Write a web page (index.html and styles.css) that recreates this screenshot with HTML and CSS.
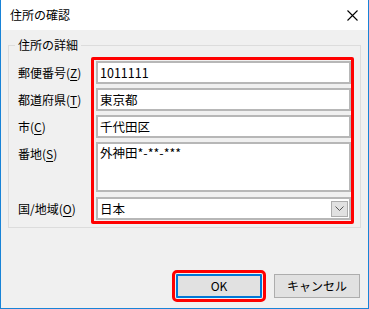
FILE: index.html
```html
<!DOCTYPE html>
<html lang="ja">
<head>
<meta charset="utf-8">
<link rel="stylesheet" href="styles.css">
</head>
<body>
<div class="window">
  <div class="titlebar">
    <span class="title">住所の確認</span>
    <svg class="close" width="11" height="11" viewBox="0 0 11 11"><path d="M0.5 0.5 L10.5 10.5 M10.5 0.5 L0.5 10.5" stroke="#000" stroke-width="1.1" fill="none"/></svg>
  </div>
  <div class="content">
    <div class="group">
      <span class="legend">住所の詳細</span>
      <div class="form">
        <div class="labels">
          <div class="label row">郵便番号(<u>Z</u>)</div>
          <div class="label row">都道府県(<u>T</u>)</div>
          <div class="label row">市(<u>C</u>)</div>
          <div class="label tall">番地(<u>S</u>)</div>
          <div class="label row last">国/地域(<u>O</u>)</div>
        </div>
        <div class="fields">
          <div class="input">1011111</div>
          <div class="input">東京都</div>
          <div class="input">千代田区</div>
          <div class="input area">外神田*-**-***</div>
          <div class="input combo">
            <span>日本</span>
            <span class="drop"><svg width="9" height="5" viewBox="0 0 9 5"><path d="M0.5 0.5 L4.5 4.5 L8.5 0.5" stroke="#555" stroke-width="1" fill="none"/></svg></span>
          </div>
        </div>
      </div>
    </div>
    <div class="buttons">
      <div class="btn ok">OK</div>
      <div class="btn">キャンセル</div>
    </div>
  </div>
</div>
</body>
</html>
```
FILE: styles.css
```css
* { box-sizing: border-box; }
html, body { margin: 0; padding: 0; }
body {
  font-family: "Noto Sans CJK JP", "Noto Sans", sans-serif;
  font-size: 12px;
  color: #000;
  background: #fff;
}
.window {
  width: 369px;
  height: 309px;
  border: 1px solid #1883d7;
  border-top: none;
  background: #f0f0f0;
  display: flex;
  flex-direction: column;
}
.titlebar {
  height: 30px;
  background: #fff;
  display: flex;
  align-items: center;
  justify-content: space-between;
  padding: 0 10px 0 9px;
}
.title { font-size: 12px; line-height: 16px; }
.close { display: block; margin-top: 0; }
.content {
  flex: 1;
  display: flex;
  flex-direction: column;
  padding: 15px 7px 0 7px;
}
.group {
  position: relative;
  border: 1px solid #dcdcdc;
  height: 183px;
  padding: 0 0 0 9px;
}
.legend {
  position: absolute;
  top: -9px;
  left: 6px;
  padding: 0 3px;
  background: #f0f0f0;
  line-height: 16px;
}
.form {
  display: flex;
  margin-top: 11px;
}
.labels {
  width: 73px;
  padding-top: 4px;
  display: flex;
  flex-direction: column;
  gap: 4px;
}
.label {
  height: 23px;
  line-height: 23px;
  white-space: nowrap;
}
.label.tall { height: 50px; }
.label.last { margin-top: 1px; }
.label u { text-decoration-thickness: 1px; text-underline-offset: 2px; }
.fields {
  width: 263px;
  border: 3px solid #ff0000;
  border-radius: 2px;
  padding: 1px 0 1px 2px;
  display: flex;
  flex-direction: column;
  gap: 4px;
}
.input {
  height: 23px;
  width: 255px;
  background: #fff;
  border: 2px solid #b7b7b7;
  padding: 0 2px;
  line-height: 19px;
  font-size: 12.5px;
}
.input.area {
  height: 50px;
  padding-top: 1px;
  line-height: 16px;
}
.input.combo {
  margin-top: 1px;
  display: flex;
  align-items: center;
  justify-content: space-between;
  padding-right: 1px;
}
.drop {
  width: 17px;
  height: 16px;
  background: #e1e1e1;
  border: 1px solid #adadad;
  display: flex;
  align-items: center;
  justify-content: center;
}
.drop svg { display: block; }
.buttons {
  display: flex;
  justify-content: flex-end;
  gap: 12px;
  margin-top: 46px;
  padding-right: 1px;
}
.btn {
  width: 86px;
  height: 24px;
  background: #e1e1e1;
  border: 1px solid #adadad;
  text-align: center;
  line-height: 22px;
  font-size: 12px;
}
.ok {
  border: 2px solid #0078d7;
  line-height: 20px;
  outline: 3px solid #ff0000;
  outline-offset: 1px;
  border-radius: 1px;
}
```
